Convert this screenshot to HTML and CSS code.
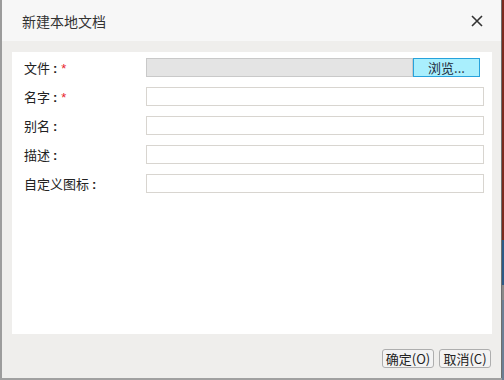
FILE: index.html
```html
<!DOCTYPE html>
<html lang="zh-CN">
<head>
  <meta charset="UTF-8" />
  <meta name="viewport" content="width=device-width, initial-scale=1" />
  <title>新建本地文档</title>
  <link rel="stylesheet" href="styles.css">
</head>
<body>

  <div class="screen">
    <div class="dialog">
      <div class="titlebar">
        <span class="title">新建本地文档</span>
        <svg class="close" width="12" height="12" viewBox="0 0 12 12">
          <path d="M1 1 L11 11 M11 1 L1 11" stroke="#333" stroke-width="1.6" fill="none" />
        </svg>
      </div>

      <div class="content">
        <div class="panel">
          <div class="row file-row">
            <label class="label">文件<span class="colon">:</span><span class="req">*</span></label>
            <input class="field readonly" type="text" readonly />
            <button class="browse">浏览...</button>
          </div>
          <div class="row">
            <label class="label">名字<span class="colon">:</span><span class="req">*</span></label>
            <input class="field" type="text" />
          </div>
          <div class="row">
            <label class="label">别名<span class="colon">:</span></label>
            <input class="field" type="text" />
          </div>
          <div class="row">
            <label class="label">描述<span class="colon">:</span></label>
            <input class="field" type="text" />
          </div>
          <div class="row">
            <label class="label">自定义图标<span class="colon">:</span></label>
            <input class="field" type="text" />
          </div>
        </div>
      </div>

      <div class="footer">
        <button class="btn">确定(O)</button>
        <button class="btn">取消(C)</button>
      </div>
    </div>
    <div class="backdrop"></div>
  </div>

</body>
</html>
```

FILE: styles.css
```css
body {
  margin: 0;
  font-family: "Noto Sans CJK SC", "Liberation Sans", sans-serif;
  font-size: 13px;
  color: #222;
}

.screen {
  display: flex;
  width: 504px;
  height: 380px;
  background: #a0a0a0;
}

.dialog {
  display: flex;
  flex-direction: column;
  width: 499px;
  height: 378px;
  border-left: 2px solid #9c9c9c;
  border-right: 1px solid #6e6e6e;
  background: #efeeec;
}

.backdrop {
  width: 2px;
  background: linear-gradient(#7b2a1f 0 240px, #2d5a86 240px 285px, #8a8a8a 285px 300px, #6c7f95 300px);
}

.titlebar {
  display: flex;
  align-items: center;
  justify-content: space-between;
  height: 41px;
  padding: 0 18px 0 20px;
  background: #f7f7f7;
}

.title {
  font-size: 14px;
  color: #333;
  line-height: 20px;
}

.content {
  padding: 11px 9px 0 10px;
}

.panel {
  height: 276px;
  padding: 6px 8px 0 12px;
  background: #fff;
}

.row {
  display: flex;
  align-items: center;
  height: 19px;
  margin-bottom: 10px;
}

.file-row {
  padding-right: 4px;
}

.label {
  width: 122px;
  flex: none;
  line-height: 19px;
  color: #222;
}

.colon {
  font-family: "Liberation Sans", sans-serif;
  font-weight: bold;
  margin: 0 4px 0 3px;
}

.req {
  color: #e8242b;
  font-family: "Liberation Sans", sans-serif;
  font-size: 13px;
}

.field {
  flex: 1;
  min-width: 0;
  height: 19px;
  box-sizing: border-box;
  margin: 0;
  padding: 0 4px;
  border: 1px solid #d8d5d0;
  background: #fff;
  outline: none;
}

.field.readonly {
  background: #e4e4e4;
  border-color: #c9c9c9;
}

.browse {
  width: 67px;
  height: 19px;
  box-sizing: border-box;
  margin: 0;
  padding: 0;
  border: 1px solid #27a2dc;
  background: #a9effd;
  font-family: inherit;
  font-size: 13px;
  line-height: 16px;
  color: #1d2a3a;
}

.footer {
  display: flex;
  justify-content: flex-end;
  gap: 5px;
  padding: 15px 10px 0 0;
}

.btn {
  width: 52px;
  height: 19px;
  box-sizing: border-box;
  margin: 0;
  padding: 0;
  border: 1px solid #aeaeae;
  border-radius: 3px;
  background: #f3f3f3;
  font-family: inherit;
  font-size: 13px;
  line-height: 16px;
  color: #222;
}
```
